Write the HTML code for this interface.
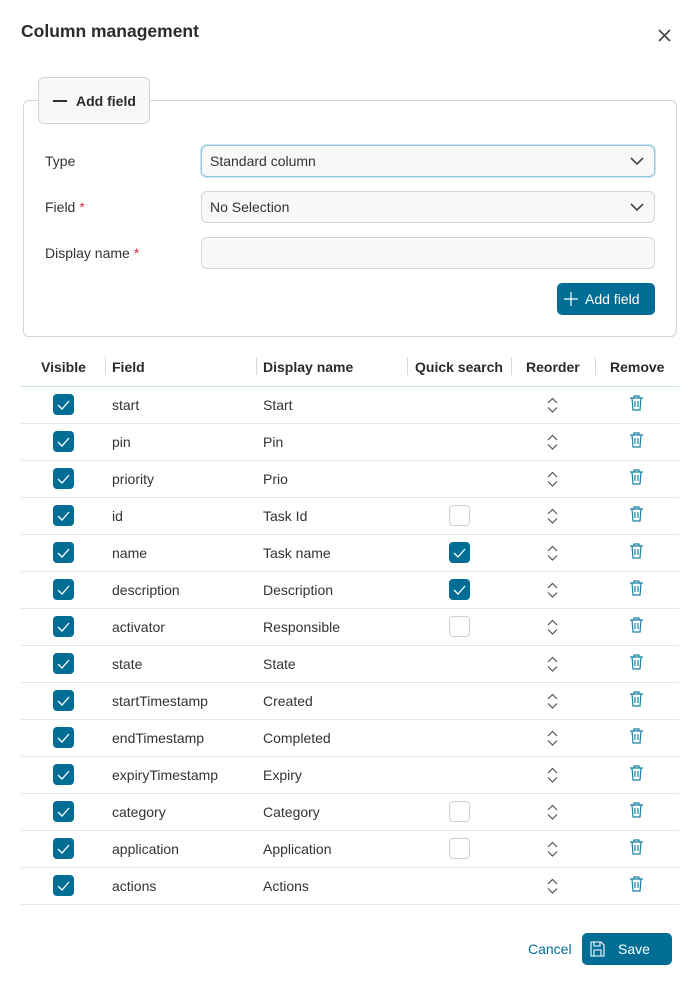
<!DOCTYPE html>
<html><head><style>
*{box-sizing:border-box;margin:0;padding:0}
body{width:700px;height:985px;background:#fff;font-family:"Liberation Sans",sans-serif;color:#333;position:relative;overflow:hidden;font-size:14px}
.a{position:absolute}
h1{position:absolute;left:21px;top:21px;font-size:17.5px;font-weight:bold;color:#2b2b2b}
.fs{left:23px;top:100px;width:654px;height:237px;border:1px solid #d4d4d4;border-radius:6px}
.leg{left:38px;top:77px;width:112px;height:47px;border:1px solid #d4d4d4;border-radius:6px;background:#f8f8f8;font-weight:bold;font-size:14px;color:#2b2b2b}
.inp{left:201px;width:454px;height:32px;border:1px solid #d4d4d4;border-radius:6px;background:#f8f8f8;padding:7px 8px;font-size:14px;color:#333}
.lbl{left:45px;font-size:14px;color:#333}
.req{color:#d0304a;margin-left:4px}
.btn{background:#006e94;color:#fff;border-radius:5px}
.hd{top:359px;font-weight:bold;font-size:14px;color:#2b2b2b}
.sep{top:357px;width:1px;height:18px;background:#d8d8d8}
.row{left:21px;width:658px;height:37px;border-bottom:1px solid #e6e6e6}
.cb{width:21px;height:21px;border-radius:4px;background:#006e94}
.cbe{width:21px;height:21px;border-radius:4px;border:1.5px solid #d0d0d0;background:#fff}
.t{font-size:14px;color:#333}
</style></head><body>
<h1>Column management</h1>
<svg class="a" style="left:657px;top:28px" width="15" height="15" viewBox="0 0 15 15"><path d="M2 2L13 13M13 2L2 13" stroke="#444" stroke-width="1.6"/></svg>
<div class="a fs"></div>
<div class="a leg"><span class="a" style="left:14px;top:22px;width:14px;height:1.5px;background:#333"></span><span class="a" style="left:37px;top:15px">Add field</span></div>
<div class="a lbl" style="top:153px">Type</div>
<div class="a lbl" style="top:199px">Field<span class="req">*</span></div>
<div class="a lbl" style="top:245px">Display name<span class="req">*</span></div>
<div class="a inp" style="top:145px;border-color:#8cc5dc;box-shadow:0 0 0 1px #cde6f0">Standard column</div>
<div class="a inp" style="top:191px">No Selection</div>
<div class="a inp" style="top:237px"></div>
<svg class="a" style="left:630px;top:156px" width="14" height="10"><path d="M1 2L7 8L13 2" fill="none" stroke="#444" stroke-width="1.6"/></svg>
<svg class="a" style="left:630px;top:202px" width="14" height="10"><path d="M1 2L7 8L13 2" fill="none" stroke="#444" stroke-width="1.6"/></svg>
<div class="a btn" style="left:557px;top:283px;width:98px;height:32px"><svg class="a" style="left:7px;top:9px" width="14" height="14"><path d="M7 0V14M0 7H14" stroke="#fff" stroke-width="1.2"/></svg><span class="a" style="left:28px;top:8px">Add field</span></div>

<div class="a hd" style="left:41px">Visible</div>
<div class="a sep" style="left:105px"></div>
<div class="a hd" style="left:112px">Field</div>
<div class="a sep" style="left:256px"></div>
<div class="a hd" style="left:263px">Display name</div>
<div class="a sep" style="left:407px"></div>
<div class="a hd" style="left:415px">Quick search</div>
<div class="a sep" style="left:511px"></div>
<div class="a hd" style="left:526px">Reorder</div>
<div class="a sep" style="left:595px"></div>
<div class="a hd" style="left:610px">Remove</div>
<div class="a" style="left:21px;top:386px;width:658px;height:1px;background:#c9e0ea"></div>

<div id="rows"></div>
<script>
var d=[["start","Start",0],["pin","Pin",0],["priority","Prio",0],["id","Task Id",1],["name","Task name",2],["description","Description",2],["activator","Responsible",1],["state","State",0],["startTimestamp","Created",0],["endTimestamp","Completed",0],["expiryTimestamp","Expiry",0],["category","Category",1],["application","Application",1],["actions","Actions",0]];
var h="";
var chk='<svg class="a" style="left:3px;top:4px" width="15" height="13"><path d="M2 7L6 11L13 3" fill="none" stroke="#fff" stroke-width="1.3"/></svg>';
d.forEach(function(r,i){var y=387+i*37;
h+='<div class="a row" style="top:'+y+'px"></div>';
h+='<div class="a cb" style="left:53px;top:'+(y+7)+'px">'+chk+'</div>';
h+='<div class="a t" style="left:112px;top:'+(y+10)+'px">'+r[0]+'</div>';
h+='<div class="a t" style="left:263px;top:'+(y+10)+'px">'+r[1]+'</div>';
if(r[2]==1)h+='<div class="a cbe" style="left:449px;top:'+(y+7)+'px"></div>';
if(r[2]==2)h+='<div class="a cb" style="left:449px;top:'+(y+7)+'px">'+chk+'</div>';
h+='<svg class="a" style="left:546px;top:'+(y+10)+'px" width="13" height="17"><path d="M2 6L6.5 1.5L11 6M2 10.5L6.5 15L11 10.5" fill="none" stroke="#555" stroke-width="1.2"/></svg>';
h+='<svg class="a" style="left:629px;top:'+(y+8)+'px" width="15" height="16"><path d="M1 3H14M5 3V1H10V3M3 3L4 15H11L12 3M6 6V12M9 6V12" fill="none" stroke="#1a7fa3" stroke-width="1.2"/></svg>';
});
document.getElementById("rows").innerHTML=h;
</script>
<div class="a" style="left:528px;top:941px;color:#006e94;font-size:14px">Cancel</div>
<div class="a btn" style="left:582px;top:933px;width:90px;height:32px"><svg class="a" style="left:8px;top:8px" width="15" height="16"><path d="M1 1H11L14 4V15H1Z M4 1V5H10V1 M4 15V9H11V15" fill="none" stroke="#fff" stroke-width="1.1"/></svg><span class="a" style="left:36px;top:8px">Save</span></div>
</body></html>
